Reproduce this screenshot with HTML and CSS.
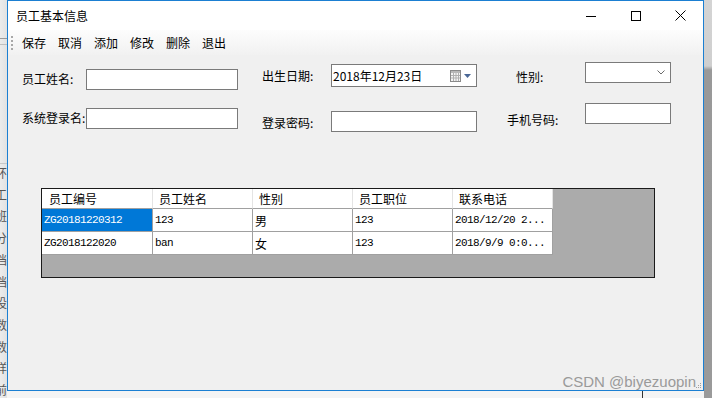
FILE: index.html
```html
<!DOCTYPE html>
<html lang="zh">
<head>
  <meta charset="UTF-8" />
  <title>员工基本信息</title>
  <link rel="stylesheet" href="styles.css">
</head>
<body>
  <div class="desktop">
    <div class="bg-left">
      <div class="bg-left-top"><span class="bg-icon"></span></div>
      <ul class="bg-list">
        <li>环</li><li>工</li><li>班</li><li>分</li><li>档</li><li>档</li>
        <li>设</li><li>数</li><li>数</li><li>详</li><li>前</li>
      </ul>
    </div>

    <div class="center">
      <div class="window">
        <div class="titlebar">
          <span class="title">员工基本信息</span>
          <div class="controls">
            <span class="ctl">
              <svg width="10" height="10" viewBox="0 0 10 10"><path d="M0 5.5h10" stroke="#000" stroke-width="1" fill="none"/></svg>
            </span>
            <span class="ctl">
              <svg width="10" height="10" viewBox="0 0 10 10"><rect x="0.5" y="0.5" width="9" height="9" stroke="#000" fill="none"/></svg>
            </span>
            <span class="ctl">
              <svg width="11" height="11" viewBox="0 0 11 11"><path d="M0.5 0.5l10 10M10.5 0.5l-10 10" stroke="#000" stroke-width="1" fill="none"/></svg>
            </span>
          </div>
        </div>

        <div class="toolbar">
          <span class="grip"></span>
          <span class="tool">保存</span>
          <span class="tool">取消</span>
          <span class="tool">添加</span>
          <span class="tool">修改</span>
          <span class="tool">删除</span>
          <span class="tool">退出</span>
        </div>

        <div class="form">
          <div class="group g1">
            <div class="field"><label>员工姓名:</label><span class="input w152"></span></div>
            <div class="field"><label>系统登录名:</label><span class="input w152"></span></div>
          </div>
          <div class="group g2">
            <div class="field">
              <label>出生日期:</label>
              <span class="date">
                <span class="date-text">2018年12月23日</span>
                <svg class="cal" width="11" height="12" viewBox="0 0 11 12">
                  <rect x="0.5" y="0.5" width="10" height="11" fill="#f4f4f4" stroke="#8a8a8a"/>
                  <rect x="1" y="1" width="9" height="2" fill="#b8b8b8"/>
                  <path d="M1 5.5h9M1 8h9M3.5 3v8M6 3v8M8.5 3v8" stroke="#b0b0b0" stroke-width="1"/>
                </svg>
                <svg class="drop" width="7" height="4" viewBox="0 0 7 4"><path d="M0 0h7L3.5 4z" fill="#4a6796"/></svg>
              </span>
            </div>
            <div class="field"><label>登录密码:</label><span class="input w146"></span></div>
          </div>
          <div class="group g3">
            <div class="field">
              <label class="pad-sex">性别:</label>
              <span class="combo">
                <svg width="8" height="5" viewBox="0 0 8 5"><path d="M0.5 0.5l3.5 3.5l3.5-3.5" stroke="#6a6a6a" fill="none"/></svg>
              </span>
            </div>
            <div class="field phone"><label>手机号码:</label><span class="input w86"></span></div>
          </div>
        </div>

        <div class="grid-box">
          <div class="grid">
            <div class="hd c1">员工编号</div>
            <div class="hd">员工姓名</div>
            <div class="hd">性别</div>
            <div class="hd">员工职位</div>
            <div class="hd">联系电话</div>

            <div class="cell mono selected">ZG20181220312</div>
            <div class="cell mono">123</div>
            <div class="cell">男</div>
            <div class="cell mono">123</div>
            <div class="cell mono">2018/12/20 2...</div>

            <div class="cell mono">ZG2018122020</div>
            <div class="cell mono">ban</div>
            <div class="cell">女</div>
            <div class="cell mono">123</div>
            <div class="cell mono">2018/9/9 0:0...</div>
          </div>
        </div>

        <div class="spacer"></div>
        <div class="footer">
          <span class="watermark">CSDN @biyezuopin</span>
          <svg class="resize" width="6" height="6" viewBox="0 0 6 6">
            <rect x="4" y="0" width="1" height="1" fill="#a0a0a0"/>
            <rect x="2" y="2" width="1" height="1" fill="#a0a0a0"/>
            <rect x="4" y="2" width="1" height="1" fill="#a0a0a0"/>
            <rect x="0" y="4" width="1" height="1" fill="#a0a0a0"/>
            <rect x="2" y="4" width="1" height="1" fill="#a0a0a0"/>
            <rect x="4" y="4" width="1" height="1" fill="#a0a0a0"/>
          </svg>
        </div>
      </div>
      <div class="bg-bottom"><span class="bg-bottom-line"></span></div>
    </div>

    <div class="bg-right"></div>
  </div>
</body>
</html>
```

FILE: styles.css
```css
body {
  margin: 0;
  padding: 0;
  font-family: "Noto Sans CJK SC", "Noto Sans", sans-serif;
  font-size: 12px;
  color: #000;
  background: #f0f0f0;
}
.desktop {
  display: flex;
  width: 712px;
  height: 398px;
  overflow: hidden;
}

/* background windows around the form */
.bg-left {
  width: 7px;
  flex: none;
  overflow: hidden;
  background: linear-gradient(to right, #ececec, #e2e2e2);
}
.bg-left-top {
  height: 164px;
  box-sizing: border-box;
  border-bottom: 1px solid #c8c8c8;
  padding-top: 38px;
}
.bg-icon {
  display: block;
  width: 7px;
  height: 5px;
  border-top: 1px solid #9a9a9a;
  border-bottom: 1px solid #c0c0c0;
  margin-bottom: 48px;
}
.bg-list {
  list-style: none;
  margin: -2px 0 0 -5px;
  padding: 0;
  color: #555;
  font-size: 12px;
  line-height: 21.7px;
  white-space: nowrap;
}
.center {
  width: 697px;
  flex: none;
  display: flex;
  flex-direction: column;
}
.bg-bottom {
  flex: 1;
  background: #f4f4f4;
  display: flex;
}
.bg-bottom-line {
  width: 1px;
  background: #333;
  margin-left: 635px;
}
.bg-right {
  flex: 1;
  background: linear-gradient(to bottom, #d4d4d4 0, #cfcfcf 66px, #999 70px, #9a9a9a 100%);
}

/* window */
.window {
  height: 391px;
  box-sizing: border-box;
  border: 1px solid #1b7fd2;
  background: #f0f0f0;
  display: flex;
  flex-direction: column;
}
.titlebar {
  height: 29px;
  flex: none;
  background: #fff;
  display: flex;
  align-items: center;
  padding-left: 8px;
}
.title {
  font-size: 12px;
  line-height: 14px;
}
.controls {
  margin-left: auto;
  display: flex;
  align-self: stretch;
}
.ctl {
  width: 45px;
  display: flex;
  align-items: center;
  justify-content: center;
}
.toolbar {
  height: 25px;
  flex: none;
  display: flex;
  align-items: center;
  padding-left: 3px;
  background: linear-gradient(to bottom, #fdfdfd, #f1f1f1);
}
.grip {
  width: 2px;
  height: 14px;
  margin-right: 3px;
  background: repeating-linear-gradient(to bottom, #a8a8a8 0, #a8a8a8 2px, transparent 2px, transparent 4px);
}
.tool {
  width: 36px;
  text-align: center;
  line-height: 14px;
}

/* form */
.form {
  height: 133px;
  flex: none;
  display: flex;
  align-items: flex-start;
  padding-left: 14px;
}
.group {
  display: flex;
  flex-direction: column;
}
.field {
  display: flex;
  align-items: flex-start;
}
.field label {
  line-height: 14px;
  white-space: nowrap;
  margin-top: 3px;
}
.g1 {
  padding-top: 14px;
  gap: 18px;
}
.g1 label {
  width: 64px;
}
.g2 {
  margin-left: 24px;
  padding-top: 9px;
  gap: 24px;
}
.g2 label {
  width: 69px;
  margin-top: 5px;
}
.g3 {
  margin-left: 30px;
  padding-top: 7px;
  gap: 19px;
}
.g3 label {
  width: 78px;
  margin-top: 10px;
}
.g3 .pad-sex {
  width: 69px;
  padding-left: 9px;
  margin-top: 8px;
}
.input, .date, .combo {
  display: flex;
  align-items: center;
  box-sizing: border-box;
  height: 21px;
  border: 1px solid #7a7a7a;
  background: #fff;
}
.w152 { width: 152px; }
.w146 { width: 146px; }
.w86 { width: 86px; }
.date {
  width: 146px;
  height: 23px;
  padding: 0 5px 0 1px;
}
.date-text {
  line-height: 14px;
}
.cal {
  margin-left: auto;
  margin-right: 3px;
}
.combo {
  width: 86px;
  justify-content: flex-end;
  padding-right: 5px;
}

/* data grid */
.grid-box {
  margin-left: 33px;
  width: 614px;
  height: 90px;
  flex: none;
  box-sizing: border-box;
  border: 1px solid #1a1a1a;
  background: #ababab;
}
.grid {
  display: grid;
  grid-template-columns: 111px 100px 100px 100px 100px;
  grid-template-rows: 20px 23px 23px;
}
.hd, .cell {
  box-sizing: border-box;
  display: flex;
  align-items: center;
  background: #fff;
  white-space: nowrap;
  overflow: hidden;
}
.hd {
  padding-left: 6px;
  font-size: 12px;
  border-right: 1px solid #e4e4e4;
  border-bottom: 1px solid #a0a0a0;
}
.hd.c1 {
  padding-left: 7px;
}
.cell {
  padding-left: 2px;
  border-right: 1px solid #a0a0a0;
  border-bottom: 1px solid #a0a0a0;
}
.mono {
  font-family: "Liberation Mono", monospace;
  font-size: 11px;
  letter-spacing: -0.6px;
}
.selected {
  background: #0078d7;
  color: #fff;
}

/* footer */
.spacer {
  flex: 1;
}
.footer {
  display: flex;
  justify-content: flex-end;
  align-items: flex-end;
  padding-right: 1px;
}
.watermark {
  font-family: "Liberation Sans", Arial, sans-serif;
  font-size: 15px;
  line-height: 17px;
  color: #9a9a9a;
}
.resize {
  margin-bottom: 1px;
}
```
